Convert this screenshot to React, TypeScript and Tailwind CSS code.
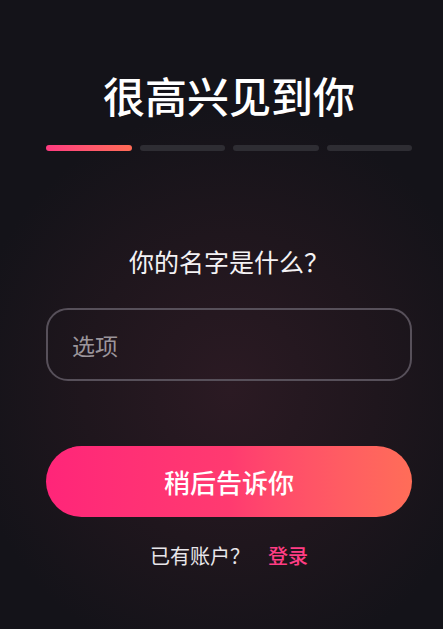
import React, { useState } from "react";

const font = { fontFamily: '"Noto Sans CJK SC", "Noto Sans", sans-serif' };

export default function App() {
  const [name, setName] = useState("");
  const steps = [true, false, false, false];

  return (
    <div
      className="w-full min-h-[629px] h-[629px] overflow-hidden bg-[radial-gradient(ellipse_60%_45%_at_52%_62%,#2b1a23_0%,#1f161d_55%,#141319_100%)] pl-[46px] pr-[31px]"
      style={font}
    >
      <h1 className="pt-[70px] text-center text-[42px] leading-[50px] font-medium text-white">
        很高兴见到你
      </h1>

      {/* steps */}
      <div className="mt-[25px] flex gap-[8px]">
        {steps.map((active, i) => (
          <div
            key={i}
            className={
              active
                ? "h-[6px] flex-1 rounded-full bg-gradient-to-r from-[#ff3a80] to-[#ff6b55]"
                : "h-[6px] flex-1 rounded-full bg-[#2e2d33]"
            }
          />
        ))}
      </div>

      <p className="mt-[94px] text-center text-[25px] leading-[32px] text-[#f4f2f4]">
        你的名字是什么？
      </p>

      <input
        value={name}
        onChange={(e) => setName(e.target.value)}
        placeholder="选项"
        className="mt-[31px] block h-[73px] w-full rounded-[22px] border-2 border-[#57505a] bg-transparent px-[24px] text-[23px] text-white placeholder:text-[#9b959b] outline-none"
        style={font}
      />

      <button
        className="mt-[65px] block h-[71px] w-full rounded-full bg-gradient-to-r from-[#ff2579] via-[#ff3a70] to-[#ff6d58] text-[26px] font-medium text-white"
        style={font}
      >
        稍后告诉你
      </button>

      <div className="mt-[25px] flex justify-center gap-[18px] text-[20px] leading-[28px]">
        <span className="text-[#e8e6ea]">已有账户？</span>
        <a className="font-medium text-[#ff3d84] cursor-pointer">登录</a>
      </div>
    </div>
  );
}
